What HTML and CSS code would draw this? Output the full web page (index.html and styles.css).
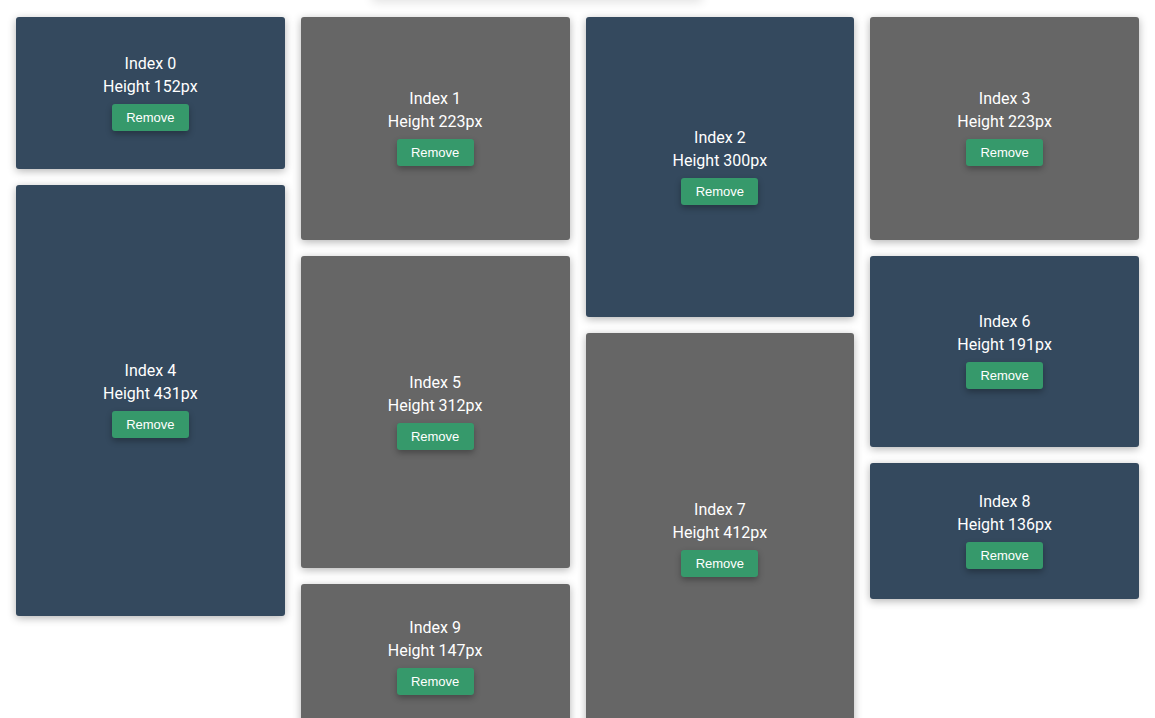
FILE: index.html
```html
<!DOCTYPE html>
<html>
<head>
<meta charset="utf-8">
<link rel="stylesheet" href="styles.css">
</head>
<body>
<div class="top-shade"></div>
<div class="masonry">
  <div class="col">
    <div class="card blue" style="height:152px"><div class="t">Index 0</div><div class="t">Height 152px</div><button class="btn">Remove</button></div>
    <div class="card blue" style="height:431px"><div class="t">Index 4</div><div class="t">Height 431px</div><button class="btn">Remove</button></div>
  </div>
  <div class="col">
    <div class="card gray" style="height:223px"><div class="t">Index 1</div><div class="t">Height 223px</div><button class="btn">Remove</button></div>
    <div class="card gray" style="height:312px"><div class="t">Index 5</div><div class="t">Height 312px</div><button class="btn">Remove</button></div>
    <div class="card gray" style="height:147px"><div class="t">Index 9</div><div class="t">Height 147px</div><button class="btn">Remove</button></div>
  </div>
  <div class="col">
    <div class="card blue" style="height:300px"><div class="t">Index 2</div><div class="t">Height 300px</div><button class="btn">Remove</button></div>
    <div class="card gray" style="height:412px"><div class="t">Index 7</div><div class="t">Height 412px</div><button class="btn">Remove</button></div>
  </div>
  <div class="col">
    <div class="card gray" style="height:223px"><div class="t">Index 3</div><div class="t">Height 223px</div><button class="btn">Remove</button></div>
    <div class="card blue" style="height:191px"><div class="t">Index 6</div><div class="t">Height 191px</div><button class="btn">Remove</button></div>
    <div class="card blue" style="height:136px"><div class="t">Index 8</div><div class="t">Height 136px</div><button class="btn">Remove</button></div>
  </div>
</div>
</body>
</html>
```
FILE: styles.css
```css
html, body {
  margin: 0;
  padding: 0;
  background: #fff;
  font-family: Roboto, "Liberation Sans", Arial, sans-serif;
  overflow: hidden;
}
.top-shade {
  position: absolute;
  left: 372px;
  width: 330px;
  top: -40px;
  height: 40px;
  box-shadow: 0 2px 10px rgba(0,0,0,0.12);
  background: #fff;
}
.masonry {
  display: flex;
  gap: 16px;
  padding: 17px 16px 0 16px;
  align-items: flex-start;
}
.col {
  flex: 1 1 0;
  display: flex;
  flex-direction: column;
  gap: 16px;
  min-width: 0;
}
.card {
  border-radius: 3px;
  box-shadow: 0 2px 8px rgba(0,0,0,0.3);
  color: #fff;
  display: flex;
  flex-direction: column;
  align-items: center;
  justify-content: center;
  box-sizing: border-box;
  padding-bottom: 4px;
}
.card.blue { background: #34495e; }
.card.gray { background: #666666; }
.t {
  font-size: 16px;
  line-height: 23px;
}
.btn {
  margin-top: 6px;
  width: 77px;
  height: 27px;
  border: none;
  border-radius: 3px;
  background: #36996b;
  color: #fff;
  font-family: "Liberation Sans", Arial, sans-serif;
  font-size: 13px;
  box-shadow: 0 3px 6px rgba(0,0,0,0.3);
  padding: 0;
}
```
